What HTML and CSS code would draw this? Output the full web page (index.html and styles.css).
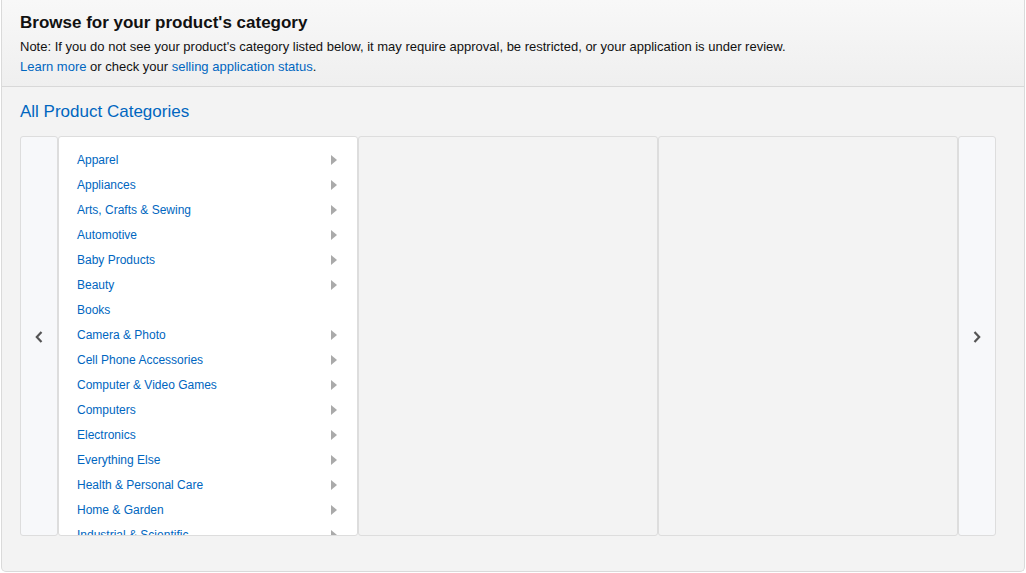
FILE: index.html
```html
<!DOCTYPE html>
<html>
<head>
<meta charset="utf-8">
<link rel="stylesheet" href="styles.css">
</head>
<body>
<div class="panel">
  <div class="header">
    <h1 class="title">Browse for your product's category</h1>
    <p class="note">Note: If you do not see your product's category listed below, it may require approval, be restricted, or your application is under review.</p>
    <p class="note"><a class="link" href="#">Learn more</a> or check your <a class="link" href="#">selling application status</a>.</p>
  </div>
  <div class="body">
    <h2 class="section">All Product Categories</h2>
    <div class="carousel">
      <div class="nav nav-left">
        <svg class="chev" width="10" height="14" viewBox="0 0 10 14"><path d="M7.5 2 L2.8 7 L7.5 12" fill="none" stroke="#555" stroke-width="2.2"/></svg>
      </div>
      <div class="col col-active">
        <ul class="list">
          <li class="item"><span>Apparel</span><i class="arrow"></i></li>
          <li class="item"><span>Appliances</span><i class="arrow"></i></li>
          <li class="item"><span>Arts, Crafts &amp; Sewing</span><i class="arrow"></i></li>
          <li class="item"><span>Automotive</span><i class="arrow"></i></li>
          <li class="item"><span>Baby Products</span><i class="arrow"></i></li>
          <li class="item"><span>Beauty</span><i class="arrow"></i></li>
          <li class="item"><span>Books</span></li>
          <li class="item"><span>Camera &amp; Photo</span><i class="arrow"></i></li>
          <li class="item"><span>Cell Phone Accessories</span><i class="arrow"></i></li>
          <li class="item"><span>Computer &amp; Video Games</span><i class="arrow"></i></li>
          <li class="item"><span>Computers</span><i class="arrow"></i></li>
          <li class="item"><span>Electronics</span><i class="arrow"></i></li>
          <li class="item"><span>Everything Else</span><i class="arrow"></i></li>
          <li class="item"><span>Health &amp; Personal Care</span><i class="arrow"></i></li>
          <li class="item"><span>Home &amp; Garden</span><i class="arrow"></i></li>
          <li class="item"><span>Industrial &amp; Scientific</span><i class="arrow"></i></li>
          <li class="item"><span>Jewelry</span><i class="arrow"></i></li>
        </ul>
      </div>
      <div class="col"></div>
      <div class="col"></div>
      <div class="nav nav-right">
        <svg class="chev" width="10" height="14" viewBox="0 0 10 14"><path d="M2.5 2 L7.2 7 L2.5 12" fill="none" stroke="#555" stroke-width="2.2"/></svg>
      </div>
    </div>
  </div>
</div>
</body>
</html>
```

FILE: styles.css
```css
html, body {
  margin: 0;
  padding: 0;
  background: #fff;
}
body {
  font-family: "Liberation Sans", Arial, sans-serif;
  color: #111;
}
.panel {
  margin-left: 1px;
  width: 1024px;
  box-sizing: border-box;
  border: 1px solid #dadada;
  border-top: none;
  border-radius: 0 0 5px 5px;
  background: #f3f3f3;
  height: 572px;
}
.header {
  background: linear-gradient(#f8f8f8, #efefef);
  border-bottom: 1px solid #d8d8d8;
  padding: 13px 18px 0;
  height: 73px;
}
.title {
  margin: 0;
  font-size: 17px;
  font-weight: bold;
  line-height: 20px;
  color: #111;
}
.note {
  margin: 0;
  font-size: 13px;
  line-height: 20px;
  color: #111;
}
.note:first-of-type {
  margin-top: 4px;
}
.link {
  color: #0066c0;
  text-decoration: none;
}
.body {
  padding: 0 18px;
}
.section {
  margin: 0;
  padding-top: 14px;
  font-size: 17px;
  font-weight: normal;
  line-height: 22px;
  color: #0066c0;
  height: 35px;
}
.carousel {
  display: flex;
  height: 400px;
}
.nav {
  width: 38px;
  box-sizing: border-box;
  background: #f7f8fa;
  border: 1px solid #dddddd;
  border-radius: 3px;
  display: flex;
  align-items: center;
  justify-content: center;
}
.chev {
  margin-top: 2px;
}
.col {
  width: 300px;
  box-sizing: border-box;
  border: 1px solid #dddddd;
  border-radius: 3px;
  background: #f3f3f3;
  overflow: hidden;
}
.col-active {
  background: #fff;
}
.list {
  list-style: none;
  margin: 0;
  padding: 10px 18px 0 18px;
}
.item {
  display: flex;
  align-items: center;
  justify-content: space-between;
  height: 25px;
  font-size: 12px;
  color: #0066c0;
}
.arrow {
  width: 0;
  height: 0;
  border-top: 5px solid transparent;
  border-bottom: 5px solid transparent;
  border-left: 6px solid #aaaaaa;
  margin-right: 2px;
}
```
